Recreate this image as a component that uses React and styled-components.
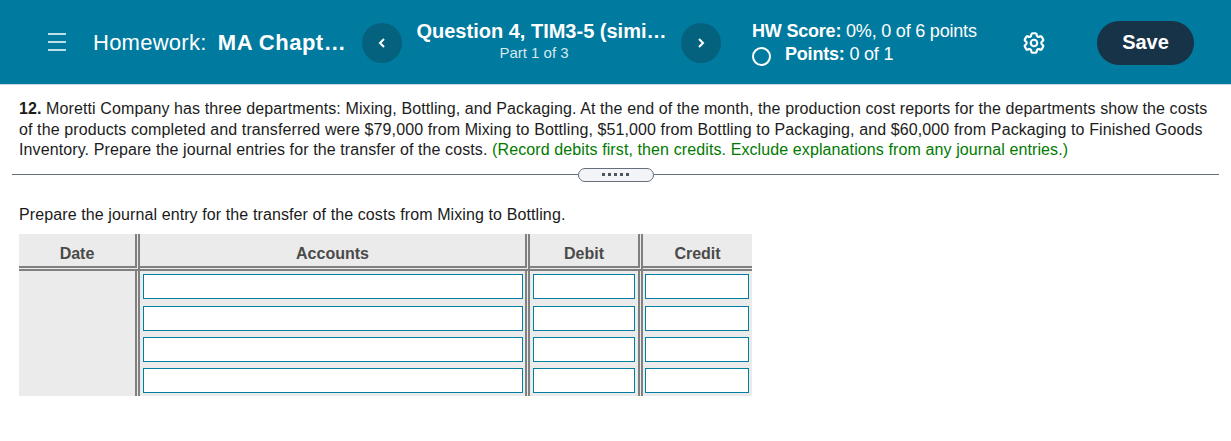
import React from "react";
import styled, { createGlobalStyle } from "styled-components";
import { HiOutlineCog6Tooth } from "react-icons/hi2";

const GlobalStyle = createGlobalStyle`
  html, body {
    margin: 0;
    padding: 0;
    background: #fff;
    font-family: "Liberation Sans", Arial, sans-serif;
    color: #1a1a1a;
  }
`;

const Header = styled.header`
  display: flex;
  align-items: center;
  box-sizing: border-box;
  height: 85px;
  padding: 2px 0 0 48px;
  background: #007a9e;
  border-bottom: 1px solid #ccd3e0;
  color: #fff;
`;

const MenuIcon = styled.svg`
  width: 18px;
  height: 18px;
  margin: 0 27px 2px 0;
  flex: none;
`;

const Title = styled.div`
  width: 269px;
  flex: none;
  font-size: 22px;
  letter-spacing: 0.25px;
  white-space: nowrap;
  b {
    margin-left: 5px;
    letter-spacing: 0.5px;
  }
`;

const RoundButton = styled.button`
  width: 40px;
  height: 40px;
  flex: none;
  display: flex;
  align-items: center;
  justify-content: center;
  padding: 0;
  border: none;
  border-radius: 50%;
  background: #05627f;
`;

const Question = styled.div`
  width: 279px;
  flex: none;
  padding-bottom: 4px;
  text-align: center;
  strong {
    display: block;
    font-size: 20px;
    line-height: 24px;
    white-space: nowrap;
  }
  span {
    display: block;
    margin-right: 15px;
    font-size: 15px;
    line-height: 20px;
    color: #d5e8ef;
  }
`;

const Score = styled.div`
  margin-left: 31px;
  width: 269px;
  flex: none;
  font-size: 18px;
  line-height: 22px;
  letter-spacing: -0.2px;
`;

const ScoreRow = styled.div`
  display: flex;
  align-items: center;
  white-space: pre;
`;

const Ring = styled.span`
  flex: none;
  box-sizing: border-box;
  width: 19px;
  height: 19px;
  border: 2.5px solid #fff;
  border-radius: 50%;
  margin: 5px 14px 0 0;
`;

const SaveButton = styled.button`
  width: 97px;
  height: 44px;
  margin-left: 50px;
  padding: 0 0 2px;
  flex: none;
  border: none;
  border-radius: 22px;
  background: #173347;
  color: #fff;
  font-family: inherit;
  font-size: 20px;
  font-weight: 700;
`;

const Content = styled.main`
  padding: 14px 19px 0;
`;

const Prompt = styled.p`
  margin: 0;
  font-size: 16px;
  letter-spacing: 0.105px;
  line-height: 20.5px;
  color: #1c1c1c;
`;

const Hint = styled.span`
  color: #007a00;
`;

const DividerRow = styled.div`
  display: flex;
  align-items: center;
  margin: 7px -7px 0;
  &::before,
  &::after {
    content: "";
    flex: 1;
    height: 1px;
    background: #66707c;
  }
`;

const Grip = styled.div`
  width: 74px;
  height: 12px;
  display: flex;
  align-items: center;
  justify-content: center;
  gap: 3.5px;
  background: #f2f4f7;
  border: 1px solid #66707c;
  border-radius: 7px;
  i {
    width: 2.5px;
    height: 2.5px;
    background: #4a5560;
  }
`;

const SubPrompt = styled.p`
  margin: 23px 0 0;
  font-size: 16px;
  letter-spacing: 0.105px;
  line-height: 20px;
`;

const Journal = styled.table`
  margin-top: 9px;
  width: 733px;
  table-layout: fixed;
  border-collapse: separate;
  border-spacing: 0;
  background: #ebebeb;
`;

const HeadCell = styled.th`
  height: 23px;
  padding: 9px 0 0;
  font-size: 16px;
  font-weight: 700;
  color: #4a4a4a;
  text-align: center;
  border-bottom: 5px double #808080;
  border-right: ${(p) => (p.$last ? "none" : "5px double #808080")};
`;

const EntryCell = styled.td`
  height: ${(p) => (p.$tall ? "32px" : "31px")};
  padding: ${(p) => p.$pad};
  vertical-align: top;
  border-right: ${(p) => (p.$last ? "none" : "5px double #808080")};
`;

const DateCell = styled.td`
  padding: 0;
  border-right: 5px double #808080;
`;

const EntryInput = styled.input`
  display: block;
  box-sizing: border-box;
  width: 100%;
  height: 25px;
  margin-top: 3px;
  padding: 0 4px;
  border: 1px solid #007fa3;
  border-radius: 0;
  background: #fff;
  outline: none;
`;

const rows = [0, 1, 2, 3];

export default function App() {
  return (
    <>
      <GlobalStyle />
      <Header>
        <MenuIcon viewBox="0 0 18 18" fill="none" stroke="#fff" strokeWidth="1.5">
          <path d="M0 1h18M0 9h18M0 17h18" />
        </MenuIcon>
        <Title>
          Homework: <b>MA Chapt…</b>
        </Title>
        <RoundButton aria-label="Previous question">
          <svg width="10" height="12" viewBox="0 0 10 12" fill="none" stroke="#fff" strokeWidth="2">
            <path d="M7 2 3 6l4 4" />
          </svg>
        </RoundButton>
        <Question>
          <strong>Question 4, TIM3-5 (simi…</strong>
          <span>Part 1 of 3</span>
        </Question>
        <RoundButton aria-label="Next question">
          <svg width="10" height="12" viewBox="0 0 10 12" fill="none" stroke="#fff" strokeWidth="2">
            <path d="M3 2l4 4-4 4" />
          </svg>
        </RoundButton>
        <Score>
          <ScoreRow>
            <b>HW Score: </b>0%, 0 of 6 points
          </ScoreRow>
          <ScoreRow>
            <Ring />
            <b>Points: </b>0 of 1
          </ScoreRow>
        </Score>
        <HiOutlineCog6Tooth size={26} color="#fff" strokeWidth={2} />
        <SaveButton>Save</SaveButton>
      </Header>
      <Content>
        <Prompt>
          <b>12.</b> Moretti Company has three departments: Mixing, Bottling, and Packaging. At the end of the month, the production cost reports for the departments show the costs of the products completed and transferred were $79,000 from Mixing to Bottling, $51,000 from Bottling to Packaging, and $60,000 from Packaging to Finished Goods Inventory. Prepare the journal entries for the transfer of the costs.{" "}
          <Hint>(Record debits first, then credits. Exclude explanations from any journal entries.)</Hint>
        </Prompt>
        <DividerRow>
          <Grip>
            <i />
            <i />
            <i />
            <i />
            <i />
          </Grip>
        </DividerRow>
        <SubPrompt>Prepare the journal entry for the transfer of the costs from Mixing to Bottling.</SubPrompt>
        <Journal>
          <colgroup>
            <col style={{ width: 121 }} />
            <col style={{ width: 390 }} />
            <col style={{ width: 113 }} />
            <col style={{ width: 109 }} />
          </colgroup>
          <thead>
            <tr>
              <HeadCell>Date</HeadCell>
              <HeadCell>Accounts</HeadCell>
              <HeadCell>Debit</HeadCell>
              <HeadCell $last>Credit</HeadCell>
            </tr>
          </thead>
          <tbody>
            {rows.map((r) => (
              <tr key={r}>
                {r === 0 && <DateCell rowSpan={4} />}
                <EntryCell $tall={r === 0} $pad="0 2px 0 3px">
                  <EntryInput />
                </EntryCell>
                <EntryCell $tall={r === 0} $pad="0 3px">
                  <EntryInput />
                </EntryCell>
                <EntryCell $tall={r === 0} $pad="0 3px 0 2px" $last>
                  <EntryInput />
                </EntryCell>
              </tr>
            ))}
          </tbody>
        </Journal>
      </Content>
    </>
  );
}
